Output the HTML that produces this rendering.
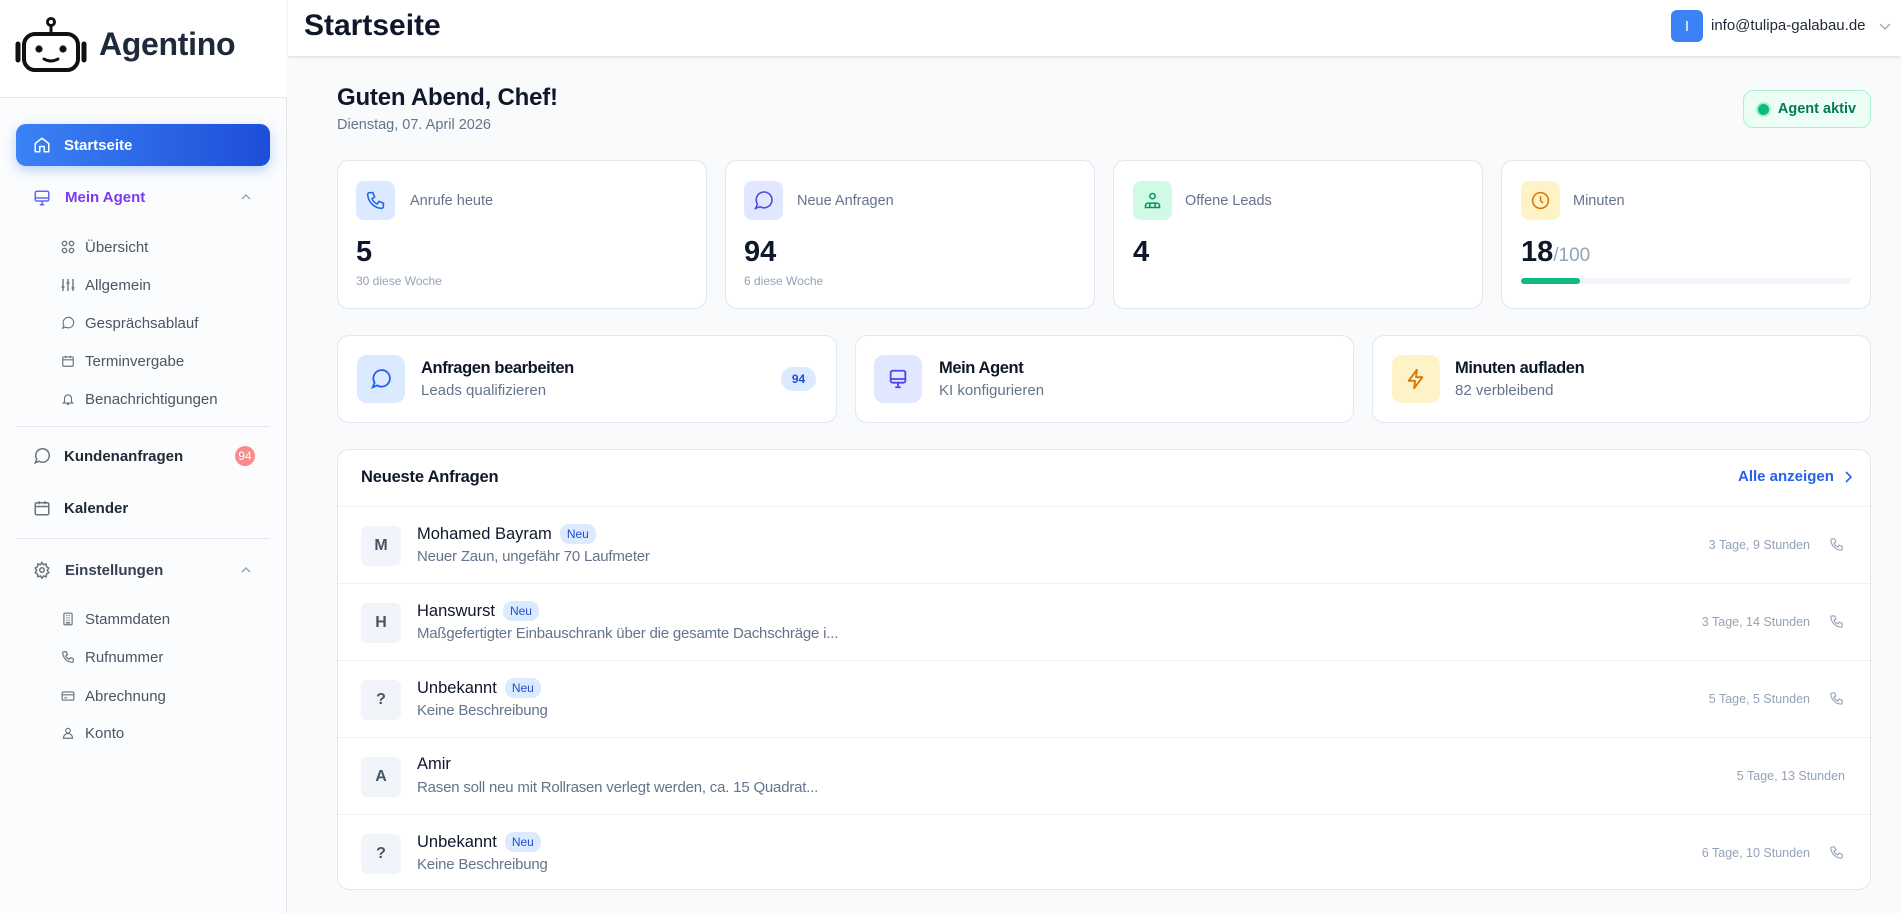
<!DOCTYPE html>
<html><head><meta charset="utf-8"><style>
*{box-sizing:border-box;margin:0;padding:0}
body{width:1901px;height:913px;overflow:hidden;font-family:"Liberation Sans",sans-serif;background:#f8fafc;position:relative;color:#0f172a}
.a{position:absolute}
svg{display:block}
.side{left:0;top:0;width:287px;height:913px;background:#fbfcfd;border-right:1px solid #e5e7eb}
.logo{left:0;top:0;width:287px;height:98px;background:#fff;border-bottom:1px solid #e5e7eb}
.nav{font-size:15px;color:#4b5563;display:flex;align-items:center;height:20px;margin-top:-9px}
.nav svg{margin-right:10px}
.card{background:#fff;border:1px solid #e2e8f0;border-radius:12px}
.ib{border-radius:8px;display:flex;align-items:center;justify-content:center}
.lbl{font-size:14.5px;color:#64748b}
.num{font-size:29px;font-weight:bold;color:#0f172a}
.sub{font-size:12px;color:#94a3b8}
.tt{font-size:16.5px;font-weight:bold;color:#0f172a;letter-spacing:-0.4px}
.row{left:0;width:1532px;height:77px;border-top:1px solid #eef2f6}
.av{left:23px;top:19px;width:40px;height:40px;border-radius:6px;background:#f1f5f9;color:#475569;font-weight:bold;font-size:16px;display:flex;align-items:center;justify-content:center}
.nm{left:79px;top:17px;font-size:16.5px;color:#0f172a;display:flex;align-items:center}
.neu{font-size:12px;color:#1d4ed8;background:#dbeafe;border-radius:9px;padding:3px 7px;margin-left:8px}
.ds{left:79px;top:41px;font-size:15px;color:#64748b;letter-spacing:-0.2px}
.tm{right:60px;top:31px;font-size:12.5px;color:#94a3b8}
.ph{right:26px;top:30px}
</style></head><body>

<div class="a side"></div>
<div class="a logo"></div>
<svg class="a" style="left:15px;top:17px" width="72" height="56" viewBox="0 0 72 56" fill="none" stroke="#111" stroke-width="4">
<circle cx="36" cy="5" r="3.5" stroke-width="3"/><line x1="36" y1="9" x2="36" y2="17" stroke-width="3"/>
<rect x="9" y="17" width="54" height="36" rx="11"/>
<path d="M3 27v16M69 27v16" stroke-width="5" stroke-linecap="round"/>
<circle cx="24" cy="32" r="3.6" fill="#111" stroke="none"/><circle cx="48" cy="32" r="3.6" fill="#111" stroke="none"/>
<path d="M29 42q7 4 14 0" stroke-width="3" stroke-linecap="round"/>
</svg>
<div class="a" style="left:99px;top:26px;font-size:32px;font-weight:bold;color:#1e293b;letter-spacing:-0.3px">Agentino</div>

<div class="a" style="left:16px;top:124px;width:254px;height:42px;border-radius:10px;background:linear-gradient(90deg,#3b82f6,#1d4ed8);box-shadow:0 4px 12px rgba(59,130,246,.35)"></div>
<svg class="a" style="left:33px;top:136px" width="18" height="18" viewBox="0 0 24 24" fill="none" stroke="#fff" stroke-width="2" stroke-linejoin="round"><path d="M3 10l9-7 9 7v11H15v-7H9v7H3z"/></svg>
<div class="a" style="left:64px;top:137px;font-size:15px;color:#fff;font-weight:600">Startseite</div>

<svg class="a" style="left:33px;top:189px" width="18" height="18" viewBox="0 0 24 24" fill="none" stroke="#6366f1" stroke-width="2"><rect x="3" y="3" width="18" height="13" rx="2"/><path d="M3 12h18M9 21h6M12 16v5"/></svg>
<div class="a" style="left:65px;top:189px;font-size:15px;color:#7c3aed;font-weight:600">Mein Agent</div>
<svg class="a" style="left:240px;top:191px" width="12" height="12" viewBox="0 0 12 12" fill="none" stroke="#9ca3af" stroke-width="1.5"><path d="M2 8l4-4 4 4"/></svg>

<div class="a nav" style="left:61px;top:246px"><svg width="14" height="14" viewBox="0 0 14 14" fill="none" stroke="#6b7280" stroke-width="1.4"><circle cx="3.5" cy="3.5" r="2.2"/><circle cx="10.5" cy="3.5" r="2.2"/><circle cx="3.5" cy="10.5" r="2.2"/><circle cx="10.5" cy="10.5" r="2.2"/></svg>Übersicht</div>
<div class="a nav" style="left:61px;top:284px"><svg width="14" height="14" viewBox="0 0 14 14" fill="none" stroke="#6b7280" stroke-width="1.4"><path d="M2 1v12M7 1v12M12 1v12"/><path d="M0.5 9h3M5.5 5h3M10.5 10h3"/></svg>Allgemein</div>
<div class="a nav" style="left:61px;top:322px"><svg width="14" height="14" viewBox="0 0 24 24" fill="none" stroke="#6b7280" stroke-width="2"><path d="M3 21l2-5a9 9 0 1 1 3 3z"/><path d="M8 12h.01M12 12h.01M16 12h.01"/></svg>Gesprächsablauf</div>
<div class="a nav" style="left:61px;top:360px"><svg width="14" height="14" viewBox="0 0 24 24" fill="none" stroke="#6b7280" stroke-width="2"><rect x="3" y="5" width="18" height="16" rx="2"/><path d="M3 10h18M8 3v4M16 3v4"/></svg>Terminvergabe</div>
<div class="a nav" style="left:61px;top:398px"><svg width="14" height="14" viewBox="0 0 24 24" fill="none" stroke="#6b7280" stroke-width="2"><path d="M6 17V11a6 6 0 0 1 12 0v6l2 2H4zM10 21h4"/></svg>Benachrichtigungen</div>

<div class="a" style="left:16px;top:426px;width:254px;height:1px;background:#e5e7eb"></div>
<svg class="a" style="left:33px;top:447px" width="18" height="18" viewBox="0 0 24 24" fill="none" stroke="#6b7280" stroke-width="2"><path d="M3 21l2-5a9 9 0 1 1 3 3z"/><path d="M8 12h.01M12 12h.01M16 12h.01"/></svg>
<div class="a" style="left:64px;top:448px;font-size:15px;color:#1f2937;font-weight:600">Kundenanfragen</div>
<div class="a" style="left:235px;top:446px;width:20px;height:20px;border-radius:10px;background:#f87171;opacity:.8;color:#fff;font-size:12px;display:flex;align-items:center;justify-content:center">94</div>

<svg class="a" style="left:33px;top:499px" width="18" height="18" viewBox="0 0 24 24" fill="none" stroke="#6b7280" stroke-width="2"><rect x="3" y="5" width="18" height="16" rx="2"/><path d="M3 10h18M8 3v4M16 3v4"/></svg>
<div class="a" style="left:64px;top:500px;font-size:15px;color:#1f2937;font-weight:600">Kalender</div>

<div class="a" style="left:16px;top:538px;width:254px;height:1px;background:#e5e7eb"></div>
<svg class="a" style="left:33px;top:561px" width="18" height="18" viewBox="0 0 24 24" fill="none" stroke="#6b7280" stroke-width="2"><circle cx="12" cy="12" r="3"/><path d="M12 2l2 3 3.5-1 .5 3.5 3 2-2 3 2 3-3 2-.5 3.5-3.5-1-2 3-2-3-3.5 1-.5-3.5-3-2 2-3-2-3 3-2 .5-3.5 3.5 1z"/></svg>
<div class="a" style="left:65px;top:562px;font-size:15px;color:#374151;font-weight:600">Einstellungen</div>
<svg class="a" style="left:240px;top:564px" width="12" height="12" viewBox="0 0 12 12" fill="none" stroke="#9ca3af" stroke-width="1.5"><path d="M2 8l4-4 4 4"/></svg>

<div class="a nav" style="left:61px;top:618px"><svg width="14" height="14" viewBox="0 0 24 24" fill="none" stroke="#6b7280" stroke-width="2"><rect x="5" y="2" width="14" height="20" rx="1"/><path d="M9 6h2M13 6h2M9 10h2M13 10h2M9 14h2M13 14h2M10 22v-4h4v4"/></svg>Stammdaten</div>
<div class="a nav" style="left:61px;top:656px"><svg width="14" height="14" viewBox="0 0 24 24" fill="none" stroke="#6b7280" stroke-width="2"><path d="M5 3h4l2 5-3 2a11 11 0 0 0 6 6l2-3 5 2v4a2 2 0 0 1-2 2A17 17 0 0 1 3 5a2 2 0 0 1 2-2z"/></svg>Rufnummer</div>
<div class="a nav" style="left:61px;top:695px"><svg width="14" height="14" viewBox="0 0 24 24" fill="none" stroke="#6b7280" stroke-width="2"><rect x="2" y="5" width="20" height="14" rx="2"/><path d="M2 10h20M6 15h4"/></svg>Abrechnung</div>
<div class="a nav" style="left:61px;top:732px"><svg width="14" height="14" viewBox="0 0 24 24" fill="none" stroke="#6b7280" stroke-width="2"><circle cx="12" cy="8" r="4"/><path d="M4 21a8 8 0 0 1 16 0z"/></svg>Konto</div>

<!-- header -->
<div class="a" style="left:288px;top:0;width:1613px;height:57px;background:#fff;border-bottom:1px solid #e5e7eb;box-shadow:0 1px 3px rgba(0,0,0,.08)"></div>
<div class="a" style="left:304px;top:9px;font-size:30px;font-weight:bold;color:#0f172a">Startseite</div>
<div class="a" style="left:1671px;top:10px;width:32px;height:32px;border-radius:6px;background:#3b82f6;color:#fff;font-size:15px;display:flex;align-items:center;justify-content:center">I</div>
<div class="a" style="left:1711px;top:17px;font-size:15px;color:#1f2937">info@tulipa-galabau.de</div>
<svg class="a" style="left:1879px;top:21px" width="12" height="10" viewBox="0 0 12 10" fill="none" stroke="#9ca3af" stroke-width="1.3"><path d="M1 3l5 5 5-5"/></svg>

<!-- greeting -->
<div class="a" style="left:337px;top:84px;font-size:24px;font-weight:bold;color:#0f172a;letter-spacing:-0.2px">Guten Abend, Chef!</div>
<div class="a" style="left:337px;top:117px;font-size:14.5px;color:#64748b">Dienstag, 07. April 2026</div>
<div class="a" style="left:1743px;top:90px;width:128px;height:38px;border-radius:10px;background:#ecfdf5;border:1px solid #a7f3d0;display:flex;align-items:center;justify-content:center;font-size:14.5px;font-weight:bold;color:#047857"><span style="width:11px;height:11px;border-radius:6px;background:#10b981;margin-right:9px;box-shadow:0 0 0 2px #a7f3d0"></span>Agent aktiv</div>

<!-- stat cards -->
<div class="a card" style="left:337px;top:160px;width:370px;height:149px"></div>
<div class="a ib" style="left:356px;top:181px;width:39px;height:39px;background:#dbeafe"><svg width="21" height="21" viewBox="0 0 24 24" fill="none" stroke="#2563eb" stroke-width="1.8"><path d="M5 3h4l2 5-3 2a11 11 0 0 0 6 6l2-3 5 2v4a2 2 0 0 1-2 2A17 17 0 0 1 3 5a2 2 0 0 1 2-2z"/></svg></div>
<div class="a lbl" style="left:410px;top:193px">Anrufe heute</div>
<div class="a num" style="left:356px;top:236px">5</div>
<div class="a sub" style="left:356px;top:274px">30 diese Woche</div>

<div class="a card" style="left:725px;top:160px;width:370px;height:149px"></div>
<div class="a ib" style="left:744px;top:181px;width:39px;height:39px;background:#e0e7ff"><svg width="21" height="21" viewBox="0 0 24 24" fill="none" stroke="#4f46e5" stroke-width="1.8"><path d="M3 21l2-5a9 9 0 1 1 3 3z"/><path d="M8 12h.01M12 12h.01M16 12h.01"/></svg></div>
<div class="a lbl" style="left:797px;top:193px">Neue Anfragen</div>
<div class="a num" style="left:744px;top:236px">94</div>
<div class="a sub" style="left:744px;top:274px">6 diese Woche</div>

<div class="a card" style="left:1113px;top:160px;width:370px;height:149px"></div>
<div class="a ib" style="left:1133px;top:181px;width:39px;height:39px;background:#d1fae5"><svg width="21" height="21" viewBox="0 0 24 24" fill="none" stroke="#059669" stroke-width="1.8"><circle cx="12" cy="7" r="3"/><path d="M4 18a3 3 0 0 1 3-3h10a3 3 0 0 1 3 3v2H4zM9 15v5M15 15v5"/></svg></div>
<div class="a lbl" style="left:1185px;top:193px">Offene Leads</div>
<div class="a num" style="left:1133px;top:236px">4</div>

<div class="a card" style="left:1501px;top:160px;width:370px;height:149px"></div>
<div class="a ib" style="left:1521px;top:181px;width:39px;height:39px;background:#fef3c7"><svg width="21" height="21" viewBox="0 0 24 24" fill="none" stroke="#d97706" stroke-width="1.8"><circle cx="12" cy="12" r="9"/><path d="M12 7v5l3 3"/></svg></div>
<div class="a lbl" style="left:1573px;top:193px">Minuten</div>
<div class="a num" style="left:1521px;top:236px">18<span style="font-size:19px;font-weight:normal;color:#94a3b8">/100</span></div>
<div class="a" style="left:1521px;top:278px;width:330px;height:6px;border-radius:3px;background:#f1f5f9"><div style="width:59px;height:6px;border-radius:3px;background:#10b981"></div></div>

<!-- action cards -->
<div class="a card" style="left:337px;top:335px;width:500px;height:88px"></div>
<div class="a ib" style="left:357px;top:355px;width:48px;height:48px;border-radius:10px;background:#dbeafe"><svg width="22" height="22" viewBox="0 0 24 24" fill="none" stroke="#2563eb" stroke-width="2"><path d="M3 21l2-5a9 9 0 1 1 3 3z"/><path d="M8 12h.01M12 12h.01M16 12h.01"/></svg></div>
<div class="a tt" style="left:421px;top:359px">Anfragen bearbeiten</div>
<div class="a" style="left:421px;top:382px;font-size:15px;color:#64748b">Leads qualifizieren</div>
<div class="a" style="left:781px;top:367px;width:35px;height:24px;border-radius:12px;background:#dbeafe;color:#1d4ed8;font-size:12px;font-weight:bold;display:flex;align-items:center;justify-content:center">94</div>

<div class="a card" style="left:855px;top:335px;width:499px;height:88px"></div>
<div class="a ib" style="left:874px;top:355px;width:48px;height:48px;border-radius:10px;background:#e0e7ff"><svg width="22" height="22" viewBox="0 0 24 24" fill="none" stroke="#4f46e5" stroke-width="2"><rect x="4" y="3" width="16" height="13" rx="2"/><path d="M4 12h16M9 21h6M12 16v5"/></svg></div>
<div class="a tt" style="left:939px;top:359px">Mein Agent</div>
<div class="a" style="left:939px;top:382px;font-size:15px;color:#64748b">KI konfigurieren</div>

<div class="a card" style="left:1372px;top:335px;width:499px;height:88px"></div>
<div class="a ib" style="left:1392px;top:355px;width:48px;height:48px;border-radius:10px;background:#fef3c7"><svg width="22" height="22" viewBox="0 0 24 24" fill="none" stroke="#d97706" stroke-width="2" stroke-linejoin="round"><path d="M13 2L4 14h7l-1 8 9-12h-7z"/></svg></div>
<div class="a tt" style="left:1455px;top:359px">Minuten aufladen</div>
<div class="a" style="left:1455px;top:382px;font-size:15px;color:#64748b">82 verbleibend</div>

<!-- list -->
<div class="a card" style="left:337px;top:449px;width:1534px;height:441px;overflow:hidden">
<div class="a" style="left:23px;top:18px;font-size:16.5px;font-weight:600;color:#0f172a;letter-spacing:-0.2px">Neueste Anfragen</div>
<div class="a" style="left:1400px;top:18px;font-size:15px;font-weight:600;color:#2563eb;display:flex;align-items:center">Alle anzeigen<svg style="margin-left:9px" width="10" height="12" viewBox="0 0 10 12" fill="none" stroke="#2563eb" stroke-width="1.6"><path d="M3 1l5 5-5 5"/></svg></div>

<div class="a row" style="top:56px"><div class="a av">M</div><div class="a nm">Mohamed Bayram<span class="neu">Neu</span></div><div class="a ds">Neuer Zaun, ungefähr 70 Laufmeter</div><div class="a tm">3 Tage, 9 Stunden</div><svg class="a ph" width="15" height="15" viewBox="0 0 24 24" fill="none" stroke="#94a3b8" stroke-width="1.8"><path d="M5 3h4l2 5-3 2a11 11 0 0 0 6 6l2-3 5 2v4a2 2 0 0 1-2 2A17 17 0 0 1 3 5a2 2 0 0 1 2-2z"/></svg></div>
<div class="a row" style="top:133px"><div class="a av">H</div><div class="a nm">Hanswurst<span class="neu">Neu</span></div><div class="a ds">Maßgefertigter Einbauschrank über die gesamte Dachschräge i...</div><div class="a tm">3 Tage, 14 Stunden</div><svg class="a ph" width="15" height="15" viewBox="0 0 24 24" fill="none" stroke="#94a3b8" stroke-width="1.8"><path d="M5 3h4l2 5-3 2a11 11 0 0 0 6 6l2-3 5 2v4a2 2 0 0 1-2 2A17 17 0 0 1 3 5a2 2 0 0 1 2-2z"/></svg></div>
<div class="a row" style="top:210px"><div class="a av">?</div><div class="a nm">Unbekannt<span class="neu">Neu</span></div><div class="a ds">Keine Beschreibung</div><div class="a tm">5 Tage, 5 Stunden</div><svg class="a ph" width="15" height="15" viewBox="0 0 24 24" fill="none" stroke="#94a3b8" stroke-width="1.8"><path d="M5 3h4l2 5-3 2a11 11 0 0 0 6 6l2-3 5 2v4a2 2 0 0 1-2 2A17 17 0 0 1 3 5a2 2 0 0 1 2-2z"/></svg></div>
<div class="a row" style="top:287px"><div class="a av">A</div><div class="a nm">Amir</div><div class="a ds">Rasen soll neu mit Rollrasen verlegt werden, ca. 15 Quadrat...</div><div class="a tm" style="right:25px">5 Tage, 13 Stunden</div></div>
<div class="a row" style="top:364px"><div class="a av">?</div><div class="a nm">Unbekannt<span class="neu">Neu</span></div><div class="a ds">Keine Beschreibung</div><div class="a tm">6 Tage, 10 Stunden</div><svg class="a ph" width="15" height="15" viewBox="0 0 24 24" fill="none" stroke="#94a3b8" stroke-width="1.8"><path d="M5 3h4l2 5-3 2a11 11 0 0 0 6 6l2-3 5 2v4a2 2 0 0 1-2 2A17 17 0 0 1 3 5a2 2 0 0 1 2-2z"/></svg></div>
</div>
</body></html>
